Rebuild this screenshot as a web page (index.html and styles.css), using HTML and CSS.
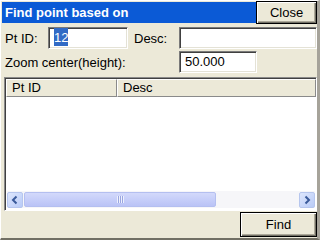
FILE: index.html
```html
<!DOCTYPE html>
<html>
<head>
<meta charset="utf-8">
<link rel="stylesheet" href="styles.css">
</head>
<body>
<div class="dialog">
  <div class="titlebar">
    <div class="title">Find point based on</div>
    <button class="btn close">Close</button>
  </div>
  <div class="row r1">
    <span class="lbl l1">Pt ID:</span>
    <div class="input i1"><span class="sel">12</span></div>
    <span class="lbl l2">Desc:</span>
    <div class="input i2"></div>
  </div>
  <div class="row r2">
    <span class="lbl l3">Zoom center(height):</span>
    <div class="input i3">50.000</div>
  </div>
  <div class="list">
    <div class="head">
      <div class="hc c1">Pt ID</div>
      <div class="hc c2">Desc</div>
    </div>
    <div class="body"></div>
    <div class="hscroll">
      <div class="arrow">
        <svg width="16" height="16" viewBox="0 0 16 16"><path d="M9.5 4.5 L6 8 L9.5 11.5" fill="none" stroke="#3a5a9a" stroke-width="2"/></svg>
      </div>
      <div class="track">
        <div class="thumb"><span class="grip"></span></div>
      </div>
      <div class="arrow">
        <svg width="16" height="16" viewBox="0 0 16 16"><path d="M6.5 4.5 L10 8 L6.5 11.5" fill="none" stroke="#3a5a9a" stroke-width="2"/></svg>
      </div>
    </div>
  </div>
  <div class="footer">
    <button class="btn find">Find</button>
  </div>
</div>
</body>
</html>
```

FILE: styles.css
```css
html, body {
  margin: 0;
  padding: 0;
  background: #ece9d8;
}
.dialog {
  width: 320px;
  height: 240px;
  box-sizing: border-box;
  background: #ece9d8;
  border-left: 1px solid #ffffff;
  border-top: 1px solid #ffffff;
  border-right: 3px solid #a6a39a;
  border-bottom: 2px solid #716f64;
  padding: 0 0 0 1px;
  display: flex;
  flex-direction: column;
  font-family: "Liberation Sans", Arial, sans-serif;
  font-size: 13px;
  color: #000;
}
.titlebar {
  display: flex;
  align-items: flex-start;
  height: 24px;
}
.title {
  flex: 1;
  margin-top: 1px;
  height: 21px;
  background: #0b5ad6;
  color: #fff;
  font-weight: bold;
  font-size: 13px;
  line-height: 21px;
  padding-left: 3px;
}
.btn {
  font-family: "Liberation Sans", Arial, sans-serif;
  font-size: 13px;
  color: #000;
  background: #ece9d8;
  border: 1px solid #000;
  box-shadow: inset 1px 1px #ffffff, inset -1px -1px #716f64, inset -2px -2px #aca899;
  padding: 0;
  margin: 0;
}
.close {
  width: 61px;
  height: 23px;
  margin-right: 0;
}
.row {
  display: flex;
  align-items: center;
  height: 22px;
}
.r1 { margin-top: 2px; }
.r2 { margin-top: 2px; }
.lbl { display: block; }
.l1 { width: 43px; padding-left: 3px; }
.l2 { width: 45px; margin-left: 6px; }
.l3 { width: 174px; padding-left: 3px; }
.input {
  box-sizing: border-box;
  height: 22px;
  background: #fff;
  border-top: 1px solid #7a7a7a;
  border-left: 1px solid #7a7a7a;
  border-right: 1px solid #ffffff;
  border-bottom: 1px solid #ffffff;
  box-shadow: inset 1px 1px #404040, inset -1px -1px #e4e2d6;
  padding-left: 5px;
  line-height: 20px;
}
.i1 { width: 80px; }
.i2 { width: 138px; }
.i3 { width: 78px; }
.sel {
  background: #316ac5;
  color: #fff;
  padding: 2px 0 1px;
}
.list {
  margin-top: 4px;
  margin-left: 2px;
  width: 313px;
  height: 134px;
  box-sizing: border-box;
  border-top: 1px solid #8a8a8a;
  border-left: 1px solid #8a8a8a;
  border-right: 1px solid #ffffff;
  border-bottom: 1px solid #ffffff;
  box-shadow: inset 1px 1px #404040;
  background: #fff;
  display: flex;
  flex-direction: column;
  padding: 1px 0 0 1px;
}
.head {
  display: flex;
  height: 18px;
}
.hc {
  box-sizing: border-box;
  height: 18px;
  background: #ece9d8;
  border-top: 1px solid #ffffff;
  border-left: 1px solid #ffffff;
  border-right: 1px solid #8a8a8a;
  border-bottom: 1px solid #8a8a8a;
  line-height: 16px;
  padding-left: 5px;
}
.c1 { width: 111px; }
.c2 { flex: 1; }
.body { flex: 1; }
.hscroll {
  display: flex;
  height: 17px;
  margin: 0 1px 2px 1px;
  background: #f6f6f9;
  align-items: center;
}
.arrow {
  width: 16px;
  height: 16px;
  box-sizing: border-box;
  border-radius: 2px;
  border: 1px solid #b6c6ee;
  background: linear-gradient(135deg, #dde6fd, #b9cbf7);
}
.arrow svg { display: block; margin: -1px; }
.track {
  flex: 1;
  height: 17px;
  display: flex;
  align-items: center;
}
.thumb {
  width: 192px;
  height: 15px;
  box-sizing: border-box;
  margin-left: 1px;
  border: 1px solid #b4bff0;
  border-radius: 2px;
  background: linear-gradient(180deg, #d3d9fb 0%, #c6cef9 50%, #bac3f6 100%);
  display: flex;
  justify-content: center;
  align-items: center;
}
.grip {
  width: 7px;
  height: 7px;
  background: repeating-linear-gradient(90deg, #eef1fe 0 1px, #9aa6e0 1px 2px);
}
.footer {
  flex: 1;
  display: flex;
  justify-content: flex-end;
  align-items: flex-start;
  padding-top: 1px;
}
.find {
  width: 77px;
  height: 25px;
}
```
